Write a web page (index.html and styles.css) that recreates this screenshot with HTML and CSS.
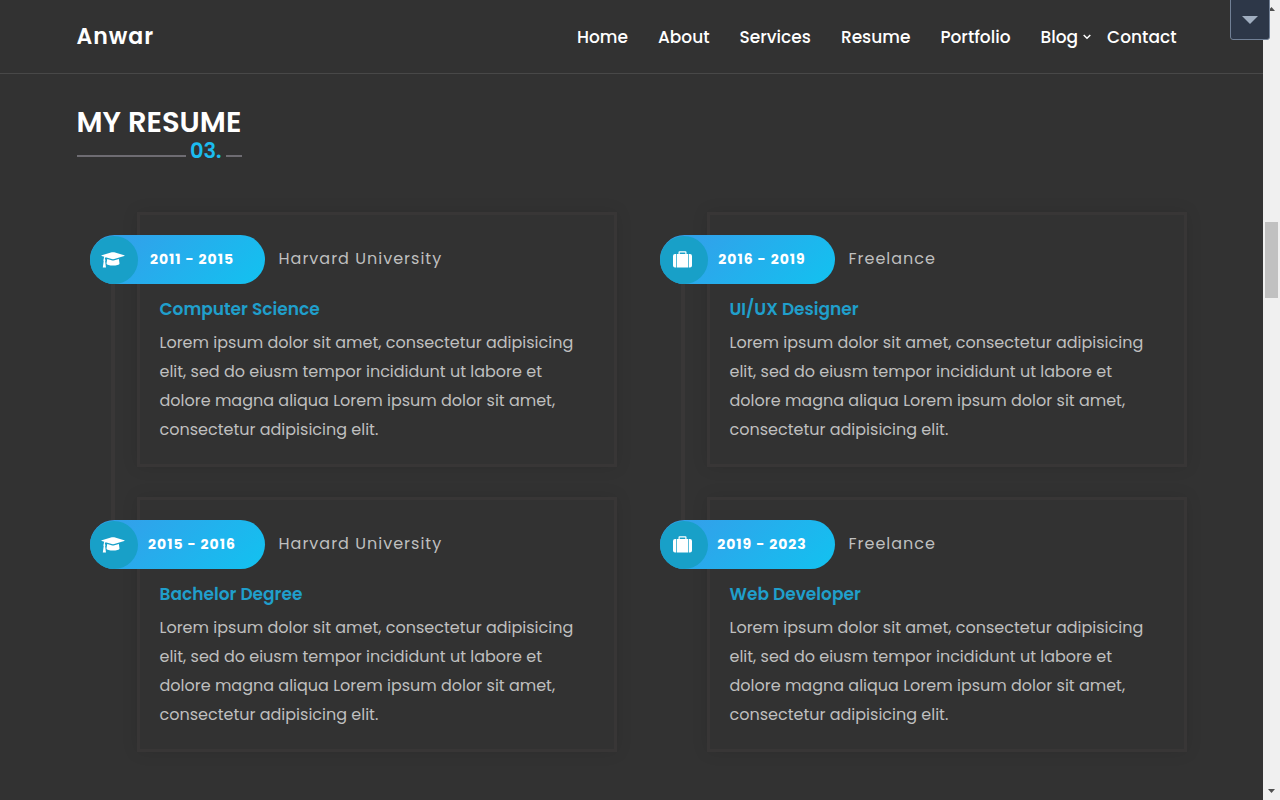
FILE: index.html
```html
<!DOCTYPE html>
<html lang="en">
<head>
<meta charset="utf-8">
<meta name="viewport" content="width=device-width, initial-scale=1">
<title>Anwar - Resume</title>
<link rel="stylesheet" href="styles.css">
</head>
<body>
<svg class="sprite" aria-hidden="true">
  <symbol id="cap" viewBox="0 0 24 16">
    <path d="M.8 3.2 10.8.3Q12 0 13.200.3L23.200 3.200Q24.200 3.600 23.200 4L13.200 7Q12 7.300 10.800 7L4.600 5.200Q3.900 5.700 3.800 7.100Q4.900 8 4.100 9.100L5 15.500H1.800L2.700 9.100Q1.900 8 2.700 7.200Q2.800 5.700 3.300 4.800L.8 4Q-.2 3.600.8 3.200Z"/>
    <path d="M6.200 7 10.500 8.300Q12 8.700 13.500 8.300L17.900 7 18.500 11.500C18.500 14.200 5.500 14.200 5.500 11.500Z"/>
  </symbol>
  <symbol id="case" viewBox="0 0 19 17">
    <path d="M3 3V16.500H2A2 2 0 0 1 0 14.500V5A2 2 0 0 1 2 3ZM15.300 3V16.500H3.700V3H5.500V1.200Q5.500 .2 6.500 .2H12.500Q13.500 .2 13.500 1.200V3ZM12.300 3V1.500H6.700V3ZM16 3H17A2 2 0 0 1 19 5V14.500A2 2 0 0 1 17 16.500H16Z"/>
  </symbol>
</svg>

<header class="site-header">
  <div class="container bar">
    <a class="brand" href="#">Anwar</a>
    <nav class="menu" aria-label="Main">
      <a href="#">Home</a>
      <a href="#">About</a>
      <a href="#">Services</a>
      <a href="#">Resume</a>
      <a href="#">Portfolio</a>
      <a class="has-menu" href="#">Blog
        <svg width="8" height="6" viewBox="0 0 8 6" aria-hidden="true"><path d="M.7 1 4 4.300 7.300 1" fill="none" stroke="currentColor" stroke-width="1.500"/></svg>
      </a>
      <a href="#">Contact</a>
    </nav>
  </div>
</header>

<main class="container">
  <div class="heading">
    <h1>MY RESUME</h1>
    <div class="rule"><span>03.</span></div>
  </div>

  <div class="columns">
    <section class="timeline" aria-label="Education">
      <article class="entry">
        <div class="meta">
          <div class="pill"><span class="badge"><svg width="24" height="16" aria-hidden="true"><use href="#cap"/></svg></span><span class="years">2011 - 2015</span></div>
          <span class="place">Harvard University</span>
        </div>
        <h2>Computer Science</h2>
        <p>Lorem ipsum dolor sit amet, consectetur adipisicing elit, sed do eiusm tempor incididunt ut labore et dolore magna aliqua Lorem ipsum dolor sit amet, consectetur adipisicing elit.</p>
      </article>
      <article class="entry">
        <div class="meta">
          <div class="pill"><span class="badge"><svg width="24" height="16" aria-hidden="true"><use href="#cap"/></svg></span><span class="years">2015 - 2016</span></div>
          <span class="place">Harvard University</span>
        </div>
        <h2>Bachelor Degree</h2>
        <p>Lorem ipsum dolor sit amet, consectetur adipisicing elit, sed do eiusm tempor incididunt ut labore et dolore magna aliqua Lorem ipsum dolor sit amet, consectetur adipisicing elit.</p>
      </article>
    </section>
    <section class="timeline" aria-label="Experience">
      <article class="entry">
        <div class="meta">
          <div class="pill"><span class="badge"><svg width="19" height="17" aria-hidden="true"><use href="#case"/></svg></span><span class="years">2016 - 2019</span></div>
          <span class="place">Freelance</span>
        </div>
        <h2>UI/UX Designer</h2>
        <p>Lorem ipsum dolor sit amet, consectetur adipisicing elit, sed do eiusm tempor incididunt ut labore et dolore magna aliqua Lorem ipsum dolor sit amet, consectetur adipisicing elit.</p>
      </article>
      <article class="entry">
        <div class="meta">
          <div class="pill"><span class="badge"><svg width="19" height="17" aria-hidden="true"><use href="#case"/></svg></span><span class="years">2019 - 2023</span></div>
          <span class="place">Freelance</span>
        </div>
        <h2>Web Developer</h2>
        <p>Lorem ipsum dolor sit amet, consectetur adipisicing elit, sed do eiusm tempor incididunt ut labore et dolore magna aliqua Lorem ipsum dolor sit amet, consectetur adipisicing elit.</p>
      </article>
    </section>
  </div>
</main>

<div class="scrollbar" aria-hidden="true">
  <svg width="7" height="4" viewBox="0 0 7 4"><path d="M0 4 3.500 0 7 4Z"/></svg>
  <div class="track"><div class="thumb"></div></div>
  <svg width="7" height="4" viewBox="0 0 7 4"><path d="M0 0 3.500 4 7 0Z"/></svg>
</div>
<button class="drawer" type="button" aria-label="Open panel">
  <svg width="16" height="8" viewBox="0 0 16 8" aria-hidden="true"><path d="M0 0H16L8 8Z" fill="#a0aec0"/></svg>
</button>
</body>
</html>
```
FILE: styles.css
```css
* {
  box-sizing: border-box;
}

body {
  margin: 0;
  padding-right: 17px;
  min-height: 100vh;
  overflow-x: hidden;
  background: #323232;
  color: #bfbfbf;
  font: 16px/29px Poppins, Inter, sans-serif;
}

h1,
h2,
p {
  margin: 0;
}

a {
  color: inherit;
  text-decoration: none;
}

.sprite {
  position: absolute;
  width: 0;
  height: 0;
}

.container {
  max-width: 1140px;
  margin: 0 auto;
  padding: 0 15px;
}

.site-header {
  border-bottom: 1px solid #484848;
}

.bar {
  display: flex;
  align-items: center;
  justify-content: space-between;
  min-height: 73px;
  color: #fff;
}

.brand {
  font-size: 22px;
  font-weight: 600;
  letter-spacing: 1px;
}

.menu {
  display: flex;
  gap: 30px;
  padding: 1px 10px 0 0;
  font-size: 17px;
  font-weight: 500;
}

.has-menu {
  display: flex;
  align-items: center;
  gap: 5px;
  margin-right: -14px;
}

.heading {
  width: 165px;
  padding-top: 32px;
}

.heading h1 {
  color: #fff;
  font-size: 29px;
  font-weight: 600;
  line-height: 33px;
  white-space: nowrap;
}

.rule {
  display: flex;
  align-items: center;
  gap: 4px;
  color: #1bbcf0;
  font-size: 21px;
  font-weight: 600;
  line-height: 24px;
}

.rule::before,
.rule::after {
  content: "";
  height: 2px;
  margin-top: 10px;
  background: #6e6c72;
}

.rule::before {
  flex: 1;
}

.rule::after {
  width: 16px;
}

.columns {
  display: grid;
  grid-template-columns: 1fr 1fr;
  gap: 30px;
  padding-top: 49px;
}

.timeline {
  display: grid;
  gap: 30px;
}

.entry {
  position: relative;
  margin-left: 60px;
  padding: 20px 18px 20px 20px;
  border: 3px solid #383636;
  box-shadow: 0 0 15px rgba(0, 0, 0, 0.1);
}

.entry:first-child::before {
  content: "";
  position: absolute;
  top: 69px;
  left: -29px;
  width: 4px;
  height: 237px;
  background: #393737;
}

.meta {
  display: flex;
  align-items: center;
  gap: 14px;
  margin-left: -70px;
}

.pill {
  position: relative;
  display: flex;
  align-items: center;
  width: 175px;
  height: 49px;
  border-radius: 25px;
  background: linear-gradient(135deg, #379be9, #12c2f0);
  color: #fff;
  font-size: 14px;
  font-weight: 700;
  letter-spacing: 1px;
}

.badge {
  display: flex;
  align-items: center;
  justify-content: center;
  width: 48px;
  height: 48px;
  padding-right: 2px;
  border-radius: 50%;
  background: #18a0c8;
}

.badge svg {
  fill: #fff;
}

.years {
  flex: 1;
  padding-right: 18px;
  text-align: center;
}

.place {
  padding-bottom: 2px;
  letter-spacing: 1px;
}

.entry h2 {
  padding: 10px 0 4px;
  color: #209fcb;
  font-size: 17px;
  font-weight: 600;
  line-height: 30px;
}

.scrollbar {
  position: fixed;
  top: 0;
  right: 0;
  bottom: 0;
  display: flex;
  flex-direction: column;
  align-items: center;
  width: 17px;
  padding: 7px 0;
  background: #f0f0f0;
  fill: #505050;
}

.track {
  flex: 1;
  width: 13px;
}

.thumb {
  height: 76px;
  margin-top: 211px;
  background: #c1c1c1;
}

.drawer {
  position: fixed;
  top: -1px;
  right: 10px;
  display: flex;
  align-items: center;
  justify-content: center;
  width: 40px;
  height: 41px;
  padding: 0;
  border: 1px solid #718096;
  border-radius: 0 0 3px 3px;
  background: #2d3748;
}
```
